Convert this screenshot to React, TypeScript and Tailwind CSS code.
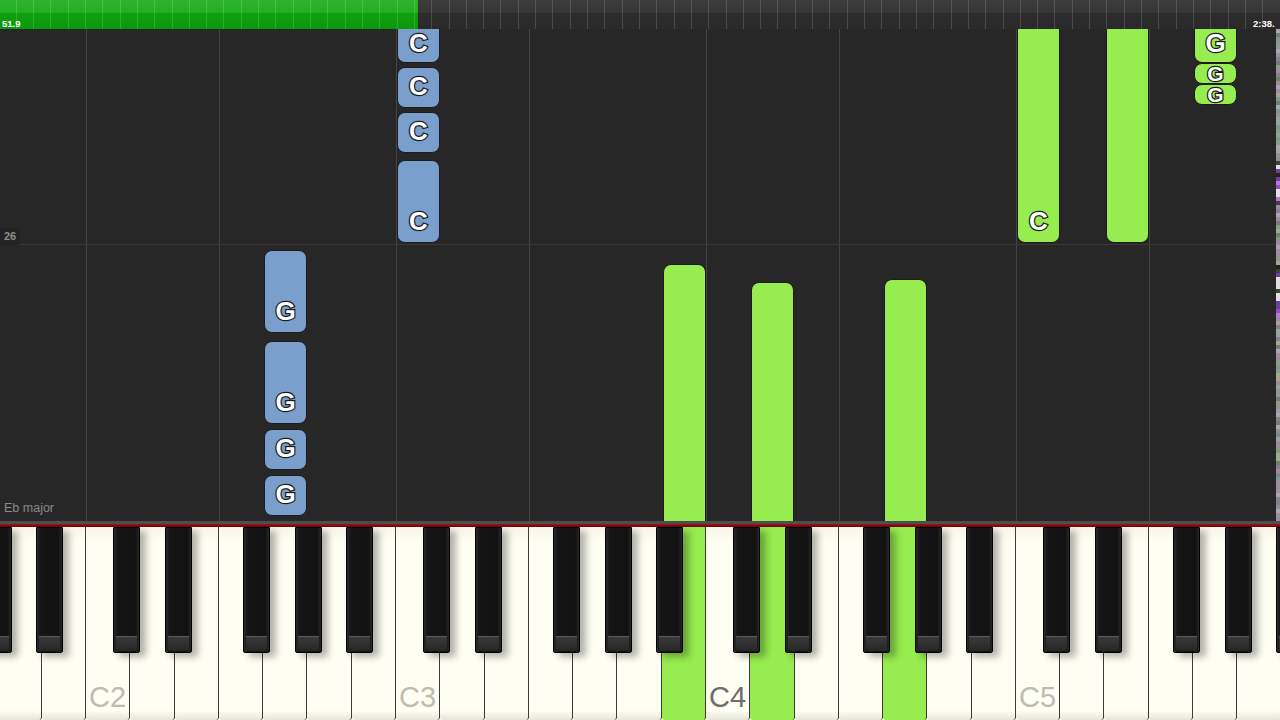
import React from 'react';

const W = 310 / 7;
const X0 = 86 - 2 * W;
const LETTERS = 'CDEFGAB';
const idxOf = (name: string) => {
  const L = name[0];
  const o = parseInt(name.slice(1), 10);
  return 2 + (o - 2) * 7 + LETTERS.indexOf(L);
};
const keyLeft = (name: string) => X0 + idxOf(name) * W;

type Note = { key: string; top: number; h: number; green?: boolean; label?: string; small?: boolean };

const NOTES: Note[] = [
  { key: 'G2', top: 221, h: 83, label: 'G' },
  { key: 'G2', top: 312, h: 83, label: 'G' },
  { key: 'G2', top: 400, h: 41, label: 'G' },
  { key: 'G2', top: 446, h: 41, label: 'G' },
  { key: 'C3', top: 0, h: 34, label: 'C' },
  { key: 'C3', top: 38, h: 41, label: 'C' },
  { key: 'C3', top: 83, h: 41, label: 'C' },
  { key: 'C3', top: 131, h: 83, label: 'C' },
  { key: 'B3', top: 235, h: 300, green: true },
  { key: 'D4', top: 253, h: 300, green: true },
  { key: 'G4', top: 250, h: 300, green: true },
  { key: 'C5', top: 0, h: 214, green: true, label: 'C' },
  { key: 'E5', top: 0, h: 214, green: true },
  { key: 'G5', top: 0, h: 34, green: true, label: 'G' },
  { key: 'G5', top: 34, h: 21, green: true, label: 'G', small: true },
  { key: 'G5', top: 55, h: 21, green: true, label: 'G', small: true },
];

const GRID = ['C2', 'F2', 'C3', 'F3', 'C4', 'F4', 'C5', 'F5'];

const WHITE_NAMES: string[] = (() => {
  const arr = ['A1', 'B1'];
  for (let o = 2; o <= 5; o++) for (const l of LETTERS) arr.push(l + o);
  return arr;
})();
const GREEN_KEYS = new Set(['B3', 'D4', 'G4']);
const LABELS: Record<string, string> = { C2: 'C2', C3: 'C3', C4: 'C4', C5: 'C5' };

const BLACK_OFFS = [27, 79, 157, 209, 260];
const BLACK_LEFTS: number[] = (() => {
  const arr: number[] = [];
  for (let o = 1; o <= 5; o++) {
    const c = 86 + (o - 2) * 310;
    for (const off of BLACK_OFFS) {
      const l = c + off;
      if (l + 27 > 0 && l < 1290) arr.push(l);
    }
  }
  return arr;
})();

const NOISE: string[] = (() => {
  const pal = ['#9a8f9a', '#7f9a84', '#a08aa0', '#8c9c8c', '#b0a0b8', '#6f7f70', '#a2a890', '#8a7f90', '#95a59a'];
  const dark = ['#c070e0', '#7040a0', '#e0e0e0', '#202020', '#9050c0', '#404040'];
  let s = 7;
  const out: string[] = [];
  for (let i = 0; i < 131; i++) {
    s = (s * 9301 + 49297) % 233280;
    const r = s / 233280;
    const y = i * 4;
    const inDark = (y > 130 && y < 175) || (y > 235 && y < 285);
    const p = inDark ? dark : pal;
    out.push(p[Math.floor(r * p.length)]);
  }
  return out;
})();

const labelCls =
  "font-['Liberation_Sans',Arial,sans-serif] font-bold text-white [-webkit-text-stroke:2.5px_#1a1a1a] [paint-order:stroke_fill]";

function TopBar() {
  const ticks = Array.from({ length: 74 });
  return (
    <div className="relative h-[29px] shrink-0 flex bg-[linear-gradient(#3d3d3d,#363636_42%,#2d2d2d_46%,#2a2a2a)]">
      <div className="w-[418px] h-full bg-[linear-gradient(#2cb52c,#25af25_42%,#0f9f0f_46%,#0a990a)]" />
      <div className="absolute inset-0 flex pl-[15.7px] pointer-events-none">
        {ticks.map((_, i) => (
          <div key={i} className="w-[17.32px] shrink-0 h-full border-l border-white/15" />
        ))}
      </div>
      <div className="absolute left-[2px] bottom-[1px] text-[9.5px] font-bold leading-none text-white font-['Liberation_Sans',Arial,sans-serif]">
        51.9
      </div>
      <div className="absolute left-[1253px] bottom-[1px] text-[9.5px] font-bold leading-none text-white font-['Liberation_Sans',Arial,sans-serif] whitespace-nowrap">
        2:38.
      </div>
    </div>
  );
}

function Roll() {
  return (
    <div className="relative h-[492px] shrink-0 overflow-hidden bg-[#272727]">
      {GRID.map((g) => (
        <div
          key={g}
          className="absolute top-0 bottom-0 w-px bg-[#444444]"
          style={{ left: Math.round(keyLeft(g)) }}
        />
      ))}
      <div className="absolute left-0 right-0 top-[215px] h-px bg-[#383838]" />
      <div className="absolute left-0 top-[199px] px-[4px] py-[3px] bg-[#232323] text-[11px] font-bold leading-none text-[#8e8e8e] font-['Liberation_Sans',Arial,sans-serif]">
        26
      </div>
      <div className="absolute left-[4px] top-[473px] text-[12.5px] leading-none text-[#8a8a8a] font-['Liberation_Sans',Arial,sans-serif]">
        Eb major
      </div>
      {NOTES.map((n, i) => (
        <div
          key={i}
          className={
            'absolute w-[43px] rounded-[8px] border border-[#1c1c1c] flex flex-col items-center ' +
            (n.top === 0 ? 'rounded-t-none border-t-0 ' : '') +
            (n.small ? 'justify-center ' : n.top === 0 && n.h < 40 ? 'justify-end pb-[9px] ' : 'justify-end pb-[11px] ') +
            (n.green ? 'bg-[#97ec4f]' : 'bg-[#7b9fcc]')
          }
          style={{ left: Math.round(keyLeft(n.key)) + 1, top: n.top, height: n.h }}
        >
          {n.label && (
            <span
              className={
                labelCls + (n.small ? ' text-[21px] leading-[16px]' : ' text-[26px] leading-[20px]')
              }
            >
              {n.label}
            </span>
          )}
        </div>
      ))}
      <div className="absolute right-0 top-0 w-[4px] h-full flex flex-col">
        {NOISE.map((c, i) => (
          <div key={i} className="h-[4px] shrink-0" style={{ background: c }} />
        ))}
      </div>
    </div>
  );
}

function Keyboard() {
  return (
    <div className="flex flex-col h-[199px] shrink-0">
      <div className="h-[3px] bg-[#4e4e4e]" />
      <div className="h-[3px] bg-[linear-gradient(#a01515,#650505)]" />
      <div className="relative h-[193px] overflow-hidden bg-[#fffef2]">
        <div className="flex h-full ml-[-2.571px]">
          {WHITE_NAMES.map((k) => (
            <div
              key={k}
              className={
                'w-[44.2857px] shrink-0 h-full border-r border-[#3c3c3c] rounded-b-[3px] flex flex-col items-center justify-end pb-[8px] ' +
                (GREEN_KEYS.has(k)
                  ? 'bg-[#97ec4f]'
                  : 'bg-[linear-gradient(#f6f5e8,#fffef3_8%,#fffef3_95%,#e6e5d8)]')
              }
            >
              {LABELS[k] && (
                <span
                  className={
                    "text-[29px] leading-none font-['Liberation_Sans',Arial,sans-serif] " +
                    (k === 'C4' ? 'text-[#6e6e6e]' : 'text-[#bdbcb3]')
                  }
                >
                  {LABELS[k]}
                </span>
              )}
            </div>
          ))}
        </div>
        {BLACK_LEFTS.map((l, i) => (
          <div
            key={i}
            className="absolute top-0 w-[27px] h-[126px] rounded-b-[2px] border border-black bg-[linear-gradient(90deg,#2a2a2a,#151515_15%,#121212_85%,#262626)] shadow-[6px_4px_7px_rgba(0,0,0,0.3)] flex flex-col justify-end"
            style={{ left: l }}
          >
            <div className="mx-[2px] mb-[1px] h-[15px] rounded-b-[2px] border-t border-[#5a5a5a] bg-[linear-gradient(#3a3a3a,#262626)]" />
          </div>
        ))}
      </div>
    </div>
  );
}

export default function App() {
  return (
    <div className="w-[1280px] h-[720px] flex flex-col overflow-hidden bg-[#272727] font-['Liberation_Sans',Arial,sans-serif]">
      <TopBar />
      <Roll />
      <Keyboard />
    </div>
  );
}
